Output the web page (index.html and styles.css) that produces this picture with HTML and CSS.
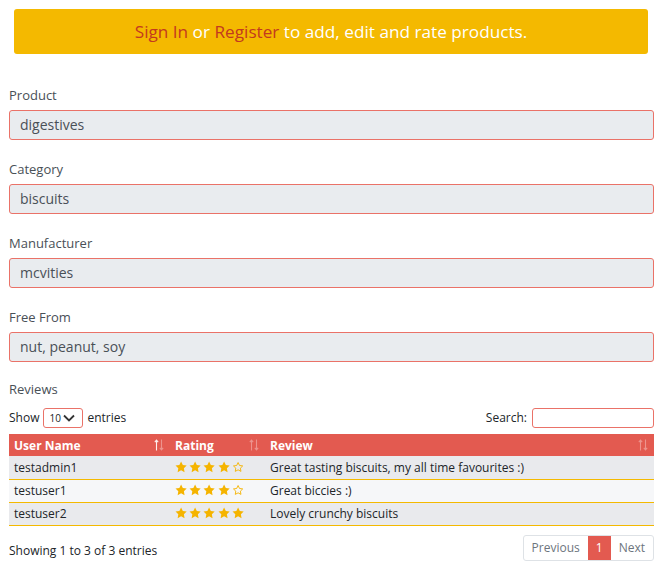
FILE: index.html
```html
<!DOCTYPE html>
<html lang="en">
<head>
<meta charset="utf-8">
<title>digestives</title>
<link rel="stylesheet" href="styles.css">
</head>
<body>
<div class="page">
  <div class="banner"><a class="banner-link" href="#">Sign In</a> or <a class="banner-link" href="#">Register</a> to add, edit and rate products.</div>

  <div class="field">
    <div class="label">Product</div>
    <div class="input">digestives</div>
  </div>
  <div class="field">
    <div class="label">Category</div>
    <div class="input">biscuits</div>
  </div>
  <div class="field">
    <div class="label">Manufacturer</div>
    <div class="input">mcvities</div>
  </div>
  <div class="field">
    <div class="label">Free From</div>
    <div class="input">nut, peanut, soy</div>
  </div>

  <div class="reviews-label">Reviews</div>

  <div class="controls">
    <div class="length">Show
      <span class="select">10<svg class="chev" width="12" height="8" viewBox="0 0 12 8"><path d="M1 1.5 L6 6.5 L11 1.5" fill="none" stroke="#333" stroke-width="1.8"/></svg></span>
      entries</div>
    <div class="search">Search: <span class="search-box"></span></div>
  </div>

  <table class="grid">
    <colgroup><col class="c1"><col class="c2"><col class="c3"></colgroup>
    <thead>
      <tr>
        <th><div class="th-in"><span>User Name</span><svg class="sort" viewBox="0 0 10 12"><path class="up on" d="M2.5 11.5V1.2M0.8 3.2L2.5 1.2 4.2 3.2"/><path class="dn" d="M7.5 0.5V10.8M5.8 8.8L7.5 10.8 9.2 8.8"/></svg></div></th>
        <th><div class="th-in"><span>Rating</span><svg class="sort" viewBox="0 0 10 12"><path class="up" d="M2.5 11.5V1.2M0.8 3.2L2.5 1.2 4.2 3.2"/><path class="dn" d="M7.5 0.5V10.8M5.8 8.8L7.5 10.8 9.2 8.8"/></svg></div></th>
        <th><div class="th-in"><span>Review</span><svg class="sort" viewBox="0 0 10 12"><path class="up" d="M2.5 11.5V1.2M0.8 3.2L2.5 1.2 4.2 3.2"/><path class="dn" d="M7.5 0.5V10.8M5.8 8.8L7.5 10.8 9.2 8.8"/></svg></div></th>
      </tr>
    </thead>
    <tbody>
      <tr class="odd">
        <td>testadmin1</td>
        <td><span class="stars">
          <svg class="star" viewBox="0 0 24 24"><path class="full" d="M12 1l3.4 6.9 7.6 1.1-5.5 5.4 1.3 7.6L12 18.4l-6.8 3.6 1.3-7.6L1 9l7.6-1.1z"/></svg>
          <svg class="star" viewBox="0 0 24 24"><path class="full" d="M12 1l3.4 6.9 7.6 1.1-5.5 5.4 1.3 7.6L12 18.4l-6.8 3.6 1.3-7.6L1 9l7.6-1.1z"/></svg>
          <svg class="star" viewBox="0 0 24 24"><path class="full" d="M12 1l3.4 6.9 7.6 1.1-5.5 5.4 1.3 7.6L12 18.4l-6.8 3.6 1.3-7.6L1 9l7.6-1.1z"/></svg>
          <svg class="star" viewBox="0 0 24 24"><path class="full" d="M12 1l3.4 6.9 7.6 1.1-5.5 5.4 1.3 7.6L12 18.4l-6.8 3.6 1.3-7.6L1 9l7.6-1.1z"/></svg>
          <svg class="star" viewBox="0 0 24 24"><path class="empty" d="M12 3l2.8 5.8 6.3.9-4.6 4.4 1.1 6.3L12 17.4l-5.6 3 1.1-6.3-4.6-4.4 6.3-.9z"/></svg>
        </span></td>
        <td>Great tasting biscuits, my all time favourites :)</td>
      </tr>
      <tr class="even">
        <td>testuser1</td>
        <td><span class="stars">
          <svg class="star" viewBox="0 0 24 24"><path class="full" d="M12 1l3.4 6.9 7.6 1.1-5.5 5.4 1.3 7.6L12 18.4l-6.8 3.6 1.3-7.6L1 9l7.6-1.1z"/></svg>
          <svg class="star" viewBox="0 0 24 24"><path class="full" d="M12 1l3.4 6.9 7.6 1.1-5.5 5.4 1.3 7.6L12 18.4l-6.8 3.6 1.3-7.6L1 9l7.6-1.1z"/></svg>
          <svg class="star" viewBox="0 0 24 24"><path class="full" d="M12 1l3.4 6.9 7.6 1.1-5.5 5.4 1.3 7.6L12 18.4l-6.8 3.6 1.3-7.6L1 9l7.6-1.1z"/></svg>
          <svg class="star" viewBox="0 0 24 24"><path class="full" d="M12 1l3.4 6.9 7.6 1.1-5.5 5.4 1.3 7.6L12 18.4l-6.8 3.6 1.3-7.6L1 9l7.6-1.1z"/></svg>
          <svg class="star" viewBox="0 0 24 24"><path class="empty" d="M12 3l2.8 5.8 6.3.9-4.6 4.4 1.1 6.3L12 17.4l-5.6 3 1.1-6.3-4.6-4.4 6.3-.9z"/></svg>
        </span></td>
        <td>Great biccies :)</td>
      </tr>
      <tr class="odd">
        <td>testuser2</td>
        <td><span class="stars">
          <svg class="star" viewBox="0 0 24 24"><path class="full" d="M12 1l3.4 6.9 7.6 1.1-5.5 5.4 1.3 7.6L12 18.4l-6.8 3.6 1.3-7.6L1 9l7.6-1.1z"/></svg>
          <svg class="star" viewBox="0 0 24 24"><path class="full" d="M12 1l3.4 6.9 7.6 1.1-5.5 5.4 1.3 7.6L12 18.4l-6.8 3.6 1.3-7.6L1 9l7.6-1.1z"/></svg>
          <svg class="star" viewBox="0 0 24 24"><path class="full" d="M12 1l3.4 6.9 7.6 1.1-5.5 5.4 1.3 7.6L12 18.4l-6.8 3.6 1.3-7.6L1 9l7.6-1.1z"/></svg>
          <svg class="star" viewBox="0 0 24 24"><path class="full" d="M12 1l3.4 6.9 7.6 1.1-5.5 5.4 1.3 7.6L12 18.4l-6.8 3.6 1.3-7.6L1 9l7.6-1.1z"/></svg>
          <svg class="star" viewBox="0 0 24 24"><path class="full" d="M12 1l3.4 6.9 7.6 1.1-5.5 5.4 1.3 7.6L12 18.4l-6.8 3.6 1.3-7.6L1 9l7.6-1.1z"/></svg>
        </span></td>
        <td>Lovely crunchy biscuits</td>
      </tr>
    </tbody>
  </table>

  <div class="footer">
    <div class="info">Showing 1 to 3 of 3 entries</div>
    <div class="pager">
      <span class="pg">Previous</span>
      <span class="pg active">1</span>
      <span class="pg">Next</span>
    </div>
  </div>
</div>
</body>
</html>
```

FILE: styles.css
```css
* { box-sizing: border-box; }
html, body { margin: 0; padding: 0; background: #fff; }
body { font-family: "Open Sans", "Liberation Sans", sans-serif; color: #212529; }

.page { padding: 9px 10px 0 9px; width: 664px; }

.banner {
  margin: 0 6px 32px 5px;
  height: 45px;
  background: #f4b900;
  border-radius: 3px;
  color: #fff;
  font-size: 17.2px;
  display: flex;
  align-items: center;
  justify-content: center;
  white-space: pre;
}
.banner-link { color: #c3391f; text-decoration: none; }

.field { margin-top: 20px; }
.label {
  font-size: 13px;
  line-height: 18px;
  color: #495057;
  margin-bottom: 6px;
}
.input {
  height: 30px;
  background: #e9ecef;
  border: 1px solid #ea7268;
  border-radius: 3px;
  padding: 0 10px;
  font-size: 14px;
  line-height: 28px;
  color: #495057;
}

.reviews-label {
  margin-top: 18px;
  font-size: 13px;
  line-height: 18px;
  color: #495057;
}

.controls {
  margin-top: 9px;
  height: 21px;
  display: flex;
  justify-content: space-between;
  align-items: center;
  font-size: 12px;
}
.length { display: flex; align-items: center; gap: 4px; }
.select {
  width: 40px;
  height: 20px;
  border: 1px solid #ea7268;
  border-radius: 3px;
  font-size: 10px;
  display: flex;
  align-items: center;
  padding-left: 5px;
  gap: 2px;
}
.chev { display: block; }
.search { display: flex; align-items: center; gap: 5px; }
.search-box {
  width: 122px;
  height: 20px;
  border: 1px solid #ea7268;
  border-radius: 3px;
  background: #fff;
}

.grid {
  margin-top: 6px;
  width: 645px;
  border-collapse: collapse;
  table-layout: fixed;
  font-size: 12px;
}
.c1 { width: 161px; }
.c2 { width: 95px; }
.grid th {
  background: #e35a50;
  color: #fff;
  font-weight: 700;
  height: 22px;
  padding: 0 6px 0 5px;
  text-align: left;
}
.th-in { display: flex; justify-content: space-between; align-items: center; }
.sort { width: 10px; height: 12px; display: block; fill: none; stroke-width: 1.1; }
.sort path { stroke: rgba(255,255,255,0.35); }
.sort path.on { stroke: rgba(255,255,255,0.9); }
.grid td {
  height: 23px;
  padding: 0 5px;
  border-bottom: 1px solid #f4b900;
  white-space: nowrap;
}
.grid tr.odd td { background: #e9eaed; }
.grid tr.even td { background: #f6f7f9; }
.stars { display: flex; gap: 2px; align-items: center; }
.star { width: 12.2px; height: 12.2px; display: block; }
.full { fill: #f5b400; }
.empty { fill: none; stroke: #f5b400; stroke-width: 1.8; }

.footer {
  margin-top: 9px;
  display: flex;
  justify-content: space-between;
  align-items: flex-start;
  font-size: 12px;
}
.info { padding-top: 8px; line-height: 16px; }
.pager {
  display: flex;
  border: 1px solid #dee2e6;
  border-radius: 3px;
  overflow: hidden;
}
.pg {
  height: 24px;
  line-height: 24px;
  padding: 0 8px;
  color: #6c757d;
}
.pg.active { background: #e35a50; color: #fff; }
```
